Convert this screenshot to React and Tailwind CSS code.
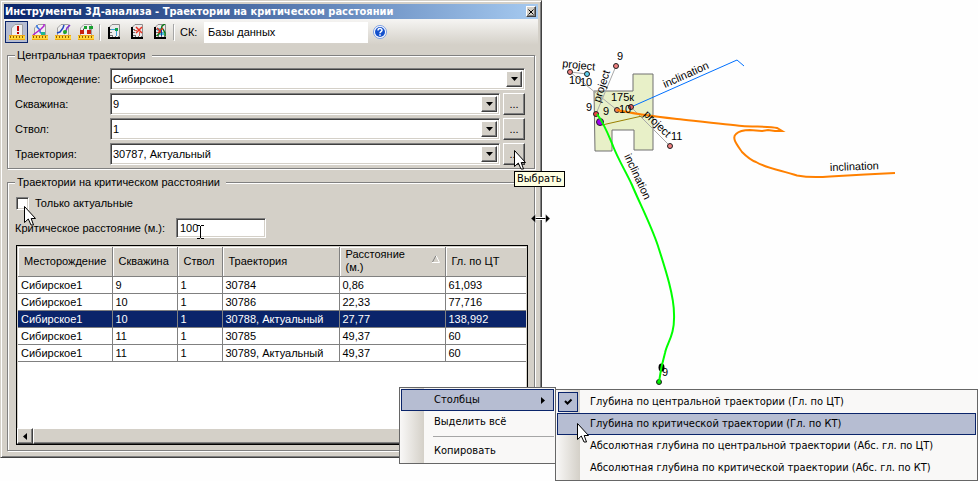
import React, { useState } from 'react';

const columns = [
  { key: 'field', label: 'Месторождение', width: 'w-[94px]' },
  { key: 'well', label: 'Скважина', width: 'w-[65px]' },
  { key: 'bore', label: 'Ствол', width: 'w-[45px]' },
  { key: 'path', label: 'Траектория', width: 'w-[117px]' },
  { key: 'distance', label: 'Расстояние (м.)', width: 'w-[106px]', sorted: true },
  { key: 'depth', label: 'Гл. по ЦТ', width: '' },
];

const rows = [
  { id: 1, field: 'Сибирское1', well: '9', bore: '1', path: '30784', distance: '0,86', depth: '61,093' },
  { id: 2, field: 'Сибирское1', well: '10', bore: '1', path: '30786', distance: '22,33', depth: '77,716' },
  { id: 3, field: 'Сибирское1', well: '10', bore: '1', path: '30788, Актуальный', distance: '27,77', depth: '138,992' },
  { id: 4, field: 'Сибирское1', well: '11', bore: '1', path: '30785', distance: '49,37', depth: '60' },
  { id: 5, field: 'Сибирское1', well: '11', bore: '1', path: '30789, Актуальный', distance: '49,37', depth: '60' },
];

const sources = [
  { id: 'field', label: 'Месторождение:', value: 'Сибирское1', browse: false },
  { id: 'well', label: 'Скважина:', value: '9', browse: true },
  { id: 'bore', label: 'Ствол:', value: '1', browse: true },
  { id: 'path', label: 'Траектория:', value: '30787, Актуальный', browse: true },
];

const depthOptions = [
  { label: 'Глубина по центральной траектории (Гл. по ЦТ)', checked: true },
  { label: 'Глубина по критической траектории (Гл. по КТ)', active: true },
  { label: 'Абсолютная глубина по центральной траектории (Абс. гл. по ЦТ)' },
  { label: 'Абсолютная глубина по критической траектории (Абс. гл. по КТ)' },
];

const raised =
  'border border-t-white border-l-white border-r-[#404040] border-b-[#404040] bg-[#d4d0c8] shadow-[inset_-1px_-1px_0_#808080]';
const sunken =
  'border border-t-[#808080] border-l-[#808080] border-r-white border-b-white bg-white shadow-[inset_1px_1px_0_#404040,inset_-1px_-1px_0_#d4d0c8]';

const Page = () => (
  <path d="M2.500 12V4L6 .5H13.500V12Z" fill="#efefef" stroke="#a0a0a0" />
);

const Ruler = () => (
  <g>
    <rect x="0" y="11" width="16" height="5" fill="#ffd83a" />
    <path d="M0 15.500H16M0 11.500H16" stroke="#f0a818" />
    <path d="M1.500 12v2M4.500 12v2M7.500 12v2M10.500 12v2M13.500 12v2" stroke="#906000" />
  </g>
);

const LogPage = () => (
  <g>
    <path d="M2.500 14V4L6 .5H13.500V14Z" fill="#ebebeb" stroke="#8c8c8c" />
    <path d="M3 3V14M2 14H14" stroke="#000" strokeWidth="2" />
    <path d="M4 5.500H6M4 8.500H6M4 11.500H6M6.500 13V11M9.500 13V12M12.500 13V12" stroke="#707070" />
  </g>
);

const toolIcons = {
  distance: (
    <>
      <Page />
      <path d="M9 2V7M9 8V10" stroke="#c00000" strokeWidth="2" />
      <Ruler />
    </>
  ),
  between: (
    <>
      <Page />
      <path d="M5 1V3L8 6V8L10 10" fill="none" stroke="#3070e0" strokeWidth="1.500" />
      <path d="M1 11L5 8L9 5L12 2V0" fill="none" stroke="#b020d0" strokeWidth="1.500" />
      <rect x="9" y="8" width="4" height="3" fill="#20b890" />
      <Ruler />
    </>
  ),
  parallel: (
    <>
      <Page />
      <path d="M2 9L5 8L8 4L9 1" fill="none" stroke="#2048c0" strokeWidth="1.500" />
      <path d="M9 10L11 7L12 4L15 1" fill="none" stroke="#8030d0" strokeWidth="1.500" />
      <circle cx="10" cy="8" r="2" fill="#20a828" />
      <Ruler />
    </>
  ),
  points: (
    <>
      <Page />
      <path d="M4 8L7 3M11 8L13 3" stroke="#404040" />
      <rect x="2" y="6" width="4" height="4" fill="#c82010" />
      <rect x="9" y="6" width="4" height="4" fill="#c82010" />
      <rect x="6" y="2" width="3" height="3" fill="#18a030" />
      <rect x="11" y="2" width="4" height="3" fill="#18a030" />
      <Ruler />
    </>
  ),
  addLog: (
    <>
      <LogPage />
      <path d="M5 5.500H10M10.500 7V12" stroke="#38a0d8" />
      <rect x="9" y="4" width="3" height="3" fill="#10a048" />
    </>
  ),
  removeLog: (
    <>
      <LogPage />
      <path d="M7 3L13 9M13 3L7 9" stroke="#e83020" strokeWidth="1.500" />
      <path d="M5 6.500H8M10.500 8V12" stroke="#c86050" />
    </>
  ),
  clearLog: (
    <>
      <LogPage />
      <path d="M5 4H9V8H12V11H7V7H5Z" fill="#48c8d8" />
      <path d="M5 12L9 7L10 2L13 0M11 5L13 9V12" fill="none" stroke="#0c7818" strokeWidth="1.500" />
      <path d="M5 4L10 9M11 4L6 9" stroke="#e02818" strokeWidth="1.500" />
      <path d="M9.500 6V12" stroke="#1838a0" />
    </>
  ),
};

const ToolButton = ({ name, title, active }) => (
  <button
    type="button"
    aria-label={title}
    className={`flex h-[22px] w-[23px] items-center justify-center border ${active ? 'border-[#0a246a] bg-[#b6bdd2]' : 'border-transparent'}`}
  >
    <svg className="h-4 w-4" viewBox="0 0 16 16">
      {toolIcons[name]}
    </svg>
  </button>
);

const Separator = () => <div className="mx-[2px] h-4 w-px bg-[#a6a6a6] shadow-[1px_1px_0_#fff]" />;

const Arrow = ({ className }) => (
  <svg className={`absolute z-30 h-5 w-3 ${className}`} viewBox="0 0 12 20">
    <path d="M.5 .5V16.500L4.300 13L7 19H9.500L7.200 12.500H11.500Z" fill="#fff" stroke="#000" />
  </svg>
);

const ComboBox = ({ id, value }) => (
  <div className={`flex h-[22px] flex-1 p-[2px] ${sunken}`}>
    <select id={id} className="min-w-0 flex-1 appearance-none bg-white outline-none" defaultValue={value}>
      <option>{value}</option>
    </select>
    <span className={`pointer-events-none flex w-4 items-center justify-center ${raised}`}>
      <svg className="h-1 w-[7px]" viewBox="0 0 7 4">
        <path d="M0 0H7L3.500 4Z" />
      </svg>
    </span>
  </div>
);

const Group = ({ title, className, children }) => (
  <fieldset
    className={`mx-[3px] min-w-0 border border-[#808080] px-[7px] shadow-[1px_1px_0_#fff,inset_1px_1px_0_#fff] ${className}`}
  >
    <legend className="bg-[#d4d0c8] pr-[6px] pl-[2px] leading-[14px]">{title}</legend>
    {children}
  </fieldset>
);

const ResultTable = ({ selected, onSelect }) => (
  <div className="flex h-[200px] flex-col border border-black bg-white">
    <div className="flex-1 border border-b-0 border-[#d4d0c8]">
      <table className="w-full table-fixed border-collapse">
        <thead>
          <tr className="h-[29px] border-b border-[#808080] bg-[#d4d0c8]">
            {columns.map((column) => (
              <th
                key={column.key}
                className={`relative border-r border-[#808080] px-[6px] text-left leading-[13px] font-normal shadow-[inset_1px_1px_0_#fff] last:border-r-0 ${column.width}`}
              >
                <span className={column.sorted ? 'block w-[70px]' : 'whitespace-nowrap'}>{column.label}</span>
                {column.sorted && (
                  <svg className="absolute top-2 right-[5px] h-2 w-2" viewBox="0 0 8 8">
                    <path d="M.5 7L4 .5" stroke="#808080" />
                    <path d="M4 .5L7.500 7.500H0" fill="none" stroke="#fff" />
                  </svg>
                )}
              </th>
            ))}
          </tr>
        </thead>
        <tbody>
          {rows.map((row) => (
            <tr
              key={row.id}
              onClick={() => onSelect(row.id)}
              className={`h-[17px] border-b border-[#808080] ${row.id === selected ? 'bg-[#0a246a] text-white' : ''}`}
            >
              {columns.map((column) => (
                <td
                  key={column.key}
                  className="border-r border-[#808080] p-0 pl-[3px] leading-4 whitespace-nowrap last:border-r-0"
                >
                  {row[column.key]}
                </td>
              ))}
            </tr>
          ))}
        </tbody>
      </table>
    </div>
    <div className="flex h-4 bg-[#d4d0c8]">
      <button type="button" aria-label="Влево" className={`flex w-4 items-center justify-center ${raised}`}>
        <svg className="h-[7px] w-1" viewBox="0 0 4 7">
          <path d="M4 0V7L0 3.500Z" />
        </svg>
      </button>
      <div className={`flex-1 ${raised}`} />
    </div>
  </div>
);

const AnalysisWindow = () => {
  const [onlyActual, setOnlyActual] = useState(false);
  const [distance, setDistance] = useState('100');
  const [selected, setSelected] = useState(3);

  return (
    <section className="relative border border-t-[#d4d0c8] border-r-[#404040] border-b-[#404040] border-l-[#d4d0c8] bg-[#d4d0c8] p-[3px] pb-[6px] font-['Liberation_Sans',sans-serif] shadow-[inset_1px_1px_0_#fff,inset_-1px_-1px_0_#808080]">
      <header className="flex h-[15px] items-center bg-linear-to-r from-[#0a246a] to-[#a6caf0] pr-[2px] pl-px text-white">
        <h1 className="flex-1 font-['DejaVu_Sans_Condensed','DejaVu_Sans',sans-serif] font-bold whitespace-nowrap">
          Инструменты 3Д-анализа - Траектории на критическом расстоянии
        </h1>
        <button type="button" aria-label="Закрыть" className={`flex h-[11px] w-[10px] items-center justify-center ${raised}`}>
          <svg className="h-[6px] w-[6px]" viewBox="0 0 6 6">
            <path d="M.5 .5L5.500 5.500M5.500 .5L.5 5.500" stroke="#000" />
          </svg>
        </button>
      </header>

      <div className="flex h-[26px] items-center bg-linear-to-b from-[#f6f5f3] to-[#d4d0c8] pl-px">
        <ToolButton name="distance" title="Критическое расстояние" active />
        <ToolButton name="between" title="Расстояние между траекториями" />
        <ToolButton name="parallel" title="Параллельные траектории" />
        <ToolButton name="points" title="Расстояние между точками" />
        <Separator />
        <ToolButton name="addLog" title="Добавить" />
        <ToolButton name="removeLog" title="Удалить" />
        <ToolButton name="clearLog" title="Очистить" />
        <Separator />
        <label htmlFor="crs" className="w-7 pl-1">
          СК:
        </label>
        <input id="crs" type="text" defaultValue="Базы данных" className="h-[21px] w-[164px] bg-white pl-1 outline-none" />
        <button type="button" aria-label="Справка" className="ml-[5px]">
          <svg className="h-[14px] w-[14px]" viewBox="0 0 14 14">
            <circle cx="7" cy="7" r="6.500" fill="#fff" stroke="#7a9ce0" />
            <circle cx="7" cy="7" r="5" fill="#1450cc" />
            <path d="M5 5.500C5 3 9 3 9 5.300C9 6.700 7 6.700 7 8.300M7 9.300V10.800" fill="none" stroke="#fff" strokeWidth="1.500" />
          </svg>
        </button>
      </div>

      <Group title="Центральная траектория" className="mt-[3px] pb-[3px]">
        <div className="flex flex-col gap-[3px] pt-[6px]">
          {sources.map((source) => (
            <div key={source.id} className="flex items-center pr-[2px]">
              <label htmlFor={source.id} className="w-[95px]">
                {source.label}
              </label>
              <ComboBox id={source.id} value={source.value} />
              {source.browse && (
                <button type="button" className={`ml-[3px] h-[22px] w-[22px] ${raised}`}>
                  ...
                </button>
              )}
            </div>
          ))}
        </div>
      </Group>

      <Group title="Траектории на критическом расстоянии" className="mt-[6px] pb-[5px]">
        <div className="flex items-center gap-[6px] pt-[7px] pl-px">
          <input
            id="only-actual"
            type="checkbox"
            checked={onlyActual}
            onChange={(e) => setOnlyActual(e.target.checked)}
            className={`h-[13px] w-[13px] appearance-none checked:bg-[#0a246a] ${sunken}`}
          />
          <label htmlFor="only-actual">Только актуальные</label>
        </div>
        <div className="mt-2 mb-[7px] flex items-center">
          <label htmlFor="distance" className="w-[161px]">
            Критическое расстояние (м.):
          </label>
          <input
            id="distance"
            type="text"
            value={distance}
            onChange={(e) => setDistance(e.target.value)}
            className={`h-5 w-[90px] pl-[3px] outline-none ${sunken}`}
          />
        </div>
        <div className="-mr-px pl-px">
          <ResultTable selected={selected} onSelect={setSelected} />
        </div>
      </Group>
    </section>
  );
};

const wells = [
  { x: 616, y: 66, fill: '#f08080' },
  { x: 570, y: 72, fill: '#f08080' },
  { x: 587, y: 74, fill: '#60d0f0' },
  { x: 631, y: 107, fill: '#f06060' },
  { x: 617, y: 110, fill: '#f08060' },
  { x: 596, y: 114, fill: '#f04040' },
  { x: 670, y: 146, fill: '#f08080' },
];

const wellLabels = [
  { x: 617, y: 60, text: '9' },
  { x: 569, y: 84, text: '10' },
  { x: 580, y: 86, text: '10' },
  { x: 586, y: 111, text: '9' },
  { x: 603, y: 115, text: '9' },
  { x: 611, y: 101, text: '175к' },
  { x: 619, y: 113, text: '10' },
  { x: 671, y: 140, text: '11' },
  { x: 662, y: 376, text: '9' },
];

const pathLabels = [
  { transform: 'translate(562 67) rotate(6)', text: 'project' },
  { transform: 'translate(600 103) rotate(-72)', text: 'project' },
  { transform: 'translate(643 115) rotate(44)', text: 'project' },
  { transform: 'translate(665 88) rotate(-24)', text: 'inclination' },
  { transform: 'translate(624 156) rotate(65)', text: 'inclination' },
  { transform: 'translate(830 171) rotate(-2)', text: 'inclination' },
];

const WellMap = () => (
  <svg className="w-full overflow-visible font-['Liberation_Sans',sans-serif] text-[11px]" viewBox="542 0 436 457">
    <path
      d="M594 91H633V74H653V150H634V130H612V151H595Z"
      fill="#e8f0c8"
      stroke="#707070"
    />
    <path d="M570 72L587 74M570 72L617 110M616 66L596 114M631 107L670 146" stroke="#a8a8a8" />
    <path d="M602 125L642 116" stroke="#9a8000" />
    <path d="M631 107L737 60L744 66" fill="none" stroke="#0070ff" />
    {wells.map((well) => (
      <circle key={`${well.x}-${well.y}`} cx={well.x} cy={well.y} r="2.500" fill={well.fill} stroke="#202020" />
    ))}
    <circle cx="600" cy="122" r="3.500" fill="#a000f0" stroke="#202020" />
    <ellipse cx="661.500" cy="367.500" rx="3" ry="4" />
    <path
      d="M617 110C630 113 650 116 677 119S730 125 742 126S770 126 777 128L782 131H775L768 130L762 131L750 130C744 130 739 131 736 134C731 138 738 146 742 152C747 157 750 160 756 162C766 168 780 170 797 175.500C810 178 824 177 830 176.500L865 174.500L895 173"
      fill="none"
      stroke="#ff8000"
      strokeWidth="2"
    />
    <circle cx="659" cy="382" r="2.500" fill="#00e000" stroke="#202020" />
    <path
      d="M597 114C604 123 608 134 613 146C618 159 626 172 632 185C640 204 651 225 658 246C665 268 674 295 674 314C675 335 667 343 665 353C662 363 660 374 659 382"
      fill="none"
      stroke="#00ff00"
      strokeWidth="2"
    />
    {wellLabels.map((label) => (
      <text key={`${label.x}-${label.y}`} x={label.x} y={label.y}>
        {label.text}
      </text>
    ))}
    {pathLabels.map((label) => (
      <text key={label.transform} transform={label.transform}>
        {label.text}
      </text>
    ))}
  </svg>
);

const Menu = ({ className, children }) => (
  <div
    role="menu"
    className={`border border-[#666] bg-[#f9f8f7] bg-linear-to-r from-[#f9f8f7] to-[#d4d0c8] bg-[length:24px_100%] bg-no-repeat p-px ${className}`}
  >
    {children}
  </div>
);

const MenuItem = ({ label, active, checked, submenu }) => (
  <button
    type="button"
    role="menuitem"
    className={`flex h-[22px] w-full items-center border pr-2 text-left whitespace-nowrap ${active ? 'border-[#0a246a] bg-[#b6bdd2]' : 'border-transparent'}`}
  >
    <span className="w-8">
      {checked && (
        <svg className="h-5 w-5 border border-[#0a246a] bg-[#b6bdd2]" viewBox="0 0 18 18">
          <path d="M6 8L8.500 10.500L12.500 6.500" fill="none" stroke="#000" strokeWidth="2" />
        </svg>
      )}
    </span>
    <span className="flex-1">{label}</span>
    {submenu && (
      <svg className="h-[7px] w-1" viewBox="0 0 4 7">
        <path d="M0 0V7L4 3.500Z" />
      </svg>
    )}
  </button>
);

const App = () => (
  <main className="relative min-h-screen overflow-hidden bg-[#fefefe] font-['DejaVu_Sans_Condensed','DejaVu_Sans',sans-serif] text-[11px] leading-[14px] text-black">
    <div className="grid grid-cols-[542fr_436fr] items-start">
      <AnalysisWindow />
      <WellMap />
    </div>

    {/* Context menu with its submenu */}
    <div className="absolute top-[387px] left-[399px] z-20 flex items-start">
      <Menu className="w-[157px]">
        <MenuItem label="Столбцы" active submenu />
        <MenuItem label="Выделить всё" />
        <hr className="my-[3px] ml-8 border-[#a6a6a6]" />
        <MenuItem label="Копировать" />
      </Menu>
      <Menu className="mt-[2px] -ml-px w-[423px]">
        {depthOptions.map((option) => (
          <MenuItem key={option.label} {...option} />
        ))}
      </Menu>
    </div>

    <div role="tooltip" className="absolute top-[171px] left-[514px] z-20 border border-black bg-[#ffffe1] px-[2px]">
      Выбрать
    </div>

    <Arrow className="top-[150px] left-[514px]" />
    <Arrow className="top-[206px] left-[24px]" />
    <Arrow className="top-[423px] left-[577px]" />
    <svg className="absolute top-[224px] left-[196px] z-30 h-4 w-[9px]" viewBox="0 0 9 16">
      <path d="M1 1.500H4M5 1.500H8M4.500 2V14M1 14.500H4M5 14.500H8" stroke="#000" />
    </svg>
    <svg className="absolute top-[213px] left-[531px] z-30 h-[11px] w-[19px]" viewBox="0 0 19 11">
      <path d="M4 5.500H15" stroke="#fff" strokeWidth="3" />
      <path d="M4 5.500H15" stroke="#000" />
      <path d="M0 5.500L4.500 1V10ZM19 5.500L14.500 1V10Z" stroke="#fff" strokeWidth=".5" />
    </svg>
  </main>
);

export default App;
